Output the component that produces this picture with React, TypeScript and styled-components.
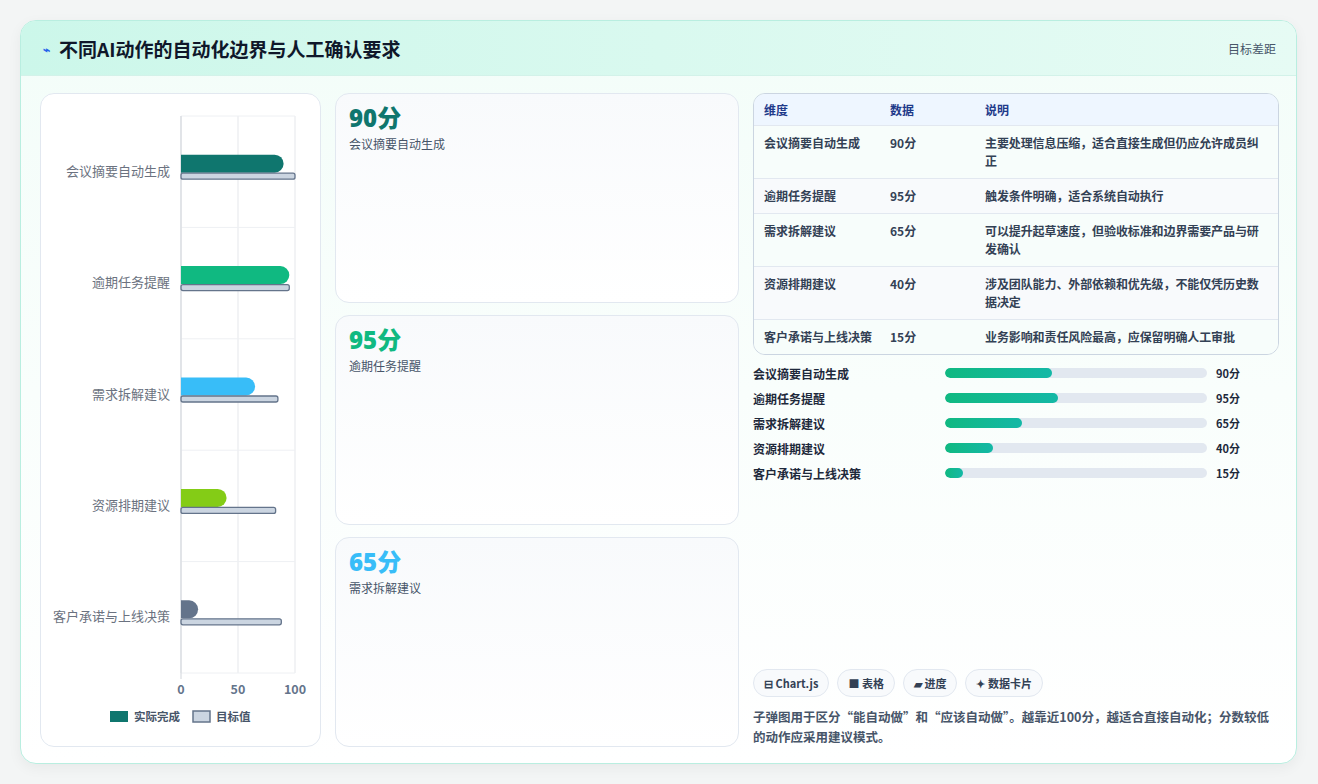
import React from "react";
import styled, { createGlobalStyle } from "styled-components";

const G = createGlobalStyle`
  body{margin:0;background:#f1f5f4;font-family:"Noto Sans CJK SC","Noto Sans",sans-serif;}
`;
const Page = styled.div`width:1318px;height:784px;box-sizing:border-box;padding:20px 21px 20px 20px;background:#f3f5f5;`;
const Card = styled.div`height:744px;box-sizing:border-box;border:1px solid #b9eee0;border-radius:16px;overflow:hidden;background:linear-gradient(180deg,#f3fdf9,#ffffff);display:flex;flex-direction:column;box-shadow:0 4px 14px rgba(0,0,0,.05);`;
const Header = styled.div`height:54px;flex:none;display:flex;align-items:center;justify-content:space-between;padding:0 20px 0 22px;background:linear-gradient(90deg,#ccf7ea,#e6fbf4);border-bottom:1px solid #d3f2e9;`;
const Title = styled.h1`margin:0;font-size:19px;font-weight:700;color:#0f172a;display:flex;align-items:center;gap:9px;`;
const Icon = styled.span`color:#2563eb;font-size:12px;`;
const Tag = styled.span`font-size:12px;color:#475569;`;
const Body = styled.div`flex:1;display:grid;grid-template-columns:281px 404px 526px;gap:14px;padding:17px 19px 18px 19px;`;
const Panel = styled.div`background:#fff;border:1px solid #e2e8f0;border-radius:14px;padding:0;position:relative;`;
const Cards = styled.div`display:grid;grid-template-rows:1fr 1fr 1fr;gap:12px;`;
const Stat = styled.div`background:linear-gradient(180deg,#f8fafc,#ffffff);border:1px solid #e2e8f0;border-radius:14px;padding:9px 13px;`;
const Val = styled.div<{c:string}>`font-size:24px;font-weight:800;color:${p=>p.c};line-height:30px;font-family:"Open Sans","Noto Sans CJK SC",sans-serif;`;
const Lab = styled.div`font-size:12px;color:#475569;margin-top:2px;`;
const Right = styled.div`display:flex;flex-direction:column;`;
const Table = styled.div`border:1px solid #cbd5e1;border-radius:12px;overflow:hidden;font-size:12px;font-weight:600;color:#334155;`;
const Row = styled.div<{h?:boolean;alt?:boolean}>`display:grid;grid-template-columns:126px 95px 1fr;padding:8px 10px 8px 10px;line-height:18px;
  background:${p=>p.h?"#eef6ff":p.alt?"#f8fafc":"#f7fdfb"};color:${p=>p.h?"#1e3a8a":"#334155"};border-top:${p=>p.h?"none":"1px solid #e2e8f0"};
  ${p=>p.h?"padding-top:7px;padding-bottom:6px;":""}`;
const Desc = styled.span`padding-right:0;letter-spacing:-0.1px;`;
const Bars = styled.div`margin-top:9px;display:flex;flex-direction:column;gap:7px;`;
const BRow = styled.div`display:grid;grid-template-columns:192px 262px 1fr;align-items:center;font-size:12px;font-weight:600;color:#1e293b;height:18px;`;
const Track = styled.div`height:10px;background:#e2e8f0;border-radius:5px;overflow:hidden;`;
const Fill = styled.div`height:100%;background:linear-gradient(90deg,#10b981,#14b8a6);border-radius:5px;`;
const BVal = styled.span`padding-left:9px;font-size:11px;font-weight:700;`;
const Spacer = styled.div`flex:1;`;
const Chips = styled.div`display:flex;gap:8px;`;
const Chip = styled.span`border:1px solid #e2e8f0;background:#f8fafc;border-radius:14px;padding:5px 10px;font-size:11px;font-weight:700;color:#334155;`;
const Note = styled.p`margin:10px 0 0;font-size:12.5px;line-height:20px;font-weight:600;color:#475569;`;

const data = [
  { n: "会议摘要自动生成", v: 90, t: 100, c: "#0f766e", d: "主要处理信息压缩，适合直接生成但仍应允许成员纠正" },
  { n: "逾期任务提醒", v: 95, t: 95, c: "#10b981", d: "触发条件明确，适合系统自动执行" },
  { n: "需求拆解建议", v: 65, t: 85, c: "#38bdf8", d: "可以提升起草速度，但验收标准和边界需要产品与研发确认" },
  { n: "资源排期建议", v: 40, t: 83, c: "#84cc16", d: "涉及团队能力、外部依赖和优先级，不能仅凭历史数据决定" },
  { n: "客户承诺与上线决策", v: 15, t: 88, c: "#64748b", d: "业务影响和责任风险最高，应保留明确人工审批" },
];

function Chart() {
  const x0 = 140, sc = 1.14, top = 22, band = 111.4;
  return (
    <svg width="281" height="652" style={{ display: "block" }}>
      {[0, 50, 100].map(t => <line key={t} x1={x0 + t * sc} x2={x0 + t * sc} y1={top} y2={top + band * 5} stroke="#e5e7eb" />)}
      {[0,1,2,3,4,5].map(i => <line key={i} x1={x0} x2={x0 + 114} y1={top + i * band} y2={top + i * band} stroke="#eef0f3" />)}
      <line x1={x0} x2={x0} y1={top} y2={top + band * 5 + 6} stroke="#d1d5db" />
      {data.map((d, i) => {
        const cy = top + band * i + band / 2;
        return (
          <g key={i}>
            <text x={129} y={cy + 4} textAnchor="end" fontSize="13" fill="#6b7280">{d.n}</text>
            <path d={`M${x0} ${cy - 17} H${x0 + d.v * sc - 9} A9 9 0 0 1 ${x0 + d.v * sc - 9} ${cy + 1} H${x0} Z`} fill={d.c} />
            <rect x={x0} y={cy + 1.5} width={d.t * sc} height={6} rx={2} fill="#cbd5e1" stroke="#64748b" strokeWidth="1.3" />
          </g>
        );
      })}
      {[0, 50, 100].map(t => <text key={t} x={x0 + t * sc} y={600} textAnchor="middle" fontSize="12.5" fontWeight="700" fill="#64748b">{t}</text>)}
      <rect x={69} y={617} width={18} height={11} fill="#0f766e" />
      <text x={93} y={627} fontSize="11.5" fontWeight="600" fill="#475569">实际完成</text>
      <rect x={152} y={617} width={17} height={11} fill="#cbd5e1" stroke="#64748b" strokeWidth="1.5" />
      <text x={175} y={627} fontSize="11.5" fontWeight="600" fill="#475569">目标值</text>
    </svg>
  );
}

export default function App() {
  return (
    <Page>
      <G />
      <Card>
        <Header>
          <Title><Icon>⌁</Icon>不同AI动作的自动化边界与人工确认要求</Title>
          <Tag>目标差距</Tag>
        </Header>
        <Body>
          <Panel><Chart /></Panel>
          <Cards>
            {data.slice(0, 3).map(d => (
              <Stat key={d.n}><Val c={d.c}>{d.v}分</Val><Lab>{d.n}</Lab></Stat>
            ))}
          </Cards>
          <Right>
            <Table>
              <Row h><span>维度</span><span>数据</span><span>说明</span></Row>
              {data.map((d, i) => (
                <Row key={d.n} alt={i % 2 === 1}><span>{d.n}</span><span>{d.v}分</span><Desc>{d.d}</Desc></Row>
              ))}
            </Table>
            <Bars>
              {data.map(d => (
                <BRow key={d.n}><span>{d.n}</span><Track><Fill style={{ width: `${d.v * 0.455}%` }} /></Track><BVal>{d.v}分</BVal></BRow>
              ))}
            </Bars>
            <Spacer />
            <Chips>
              <Chip>⊟ Chart.js</Chip><Chip>■ 表格</Chip><Chip>▰ 进度</Chip><Chip>✦ 数据卡片</Chip>
            </Chips>
            <Note>子弹图用于区分“能自动做”和“应该自动做”。越靠近100分，越适合直接自动化；分数较低的动作应采用建议模式。</Note>
          </Right>
        </Body>
      </Card>
    </Page>
  );
}
